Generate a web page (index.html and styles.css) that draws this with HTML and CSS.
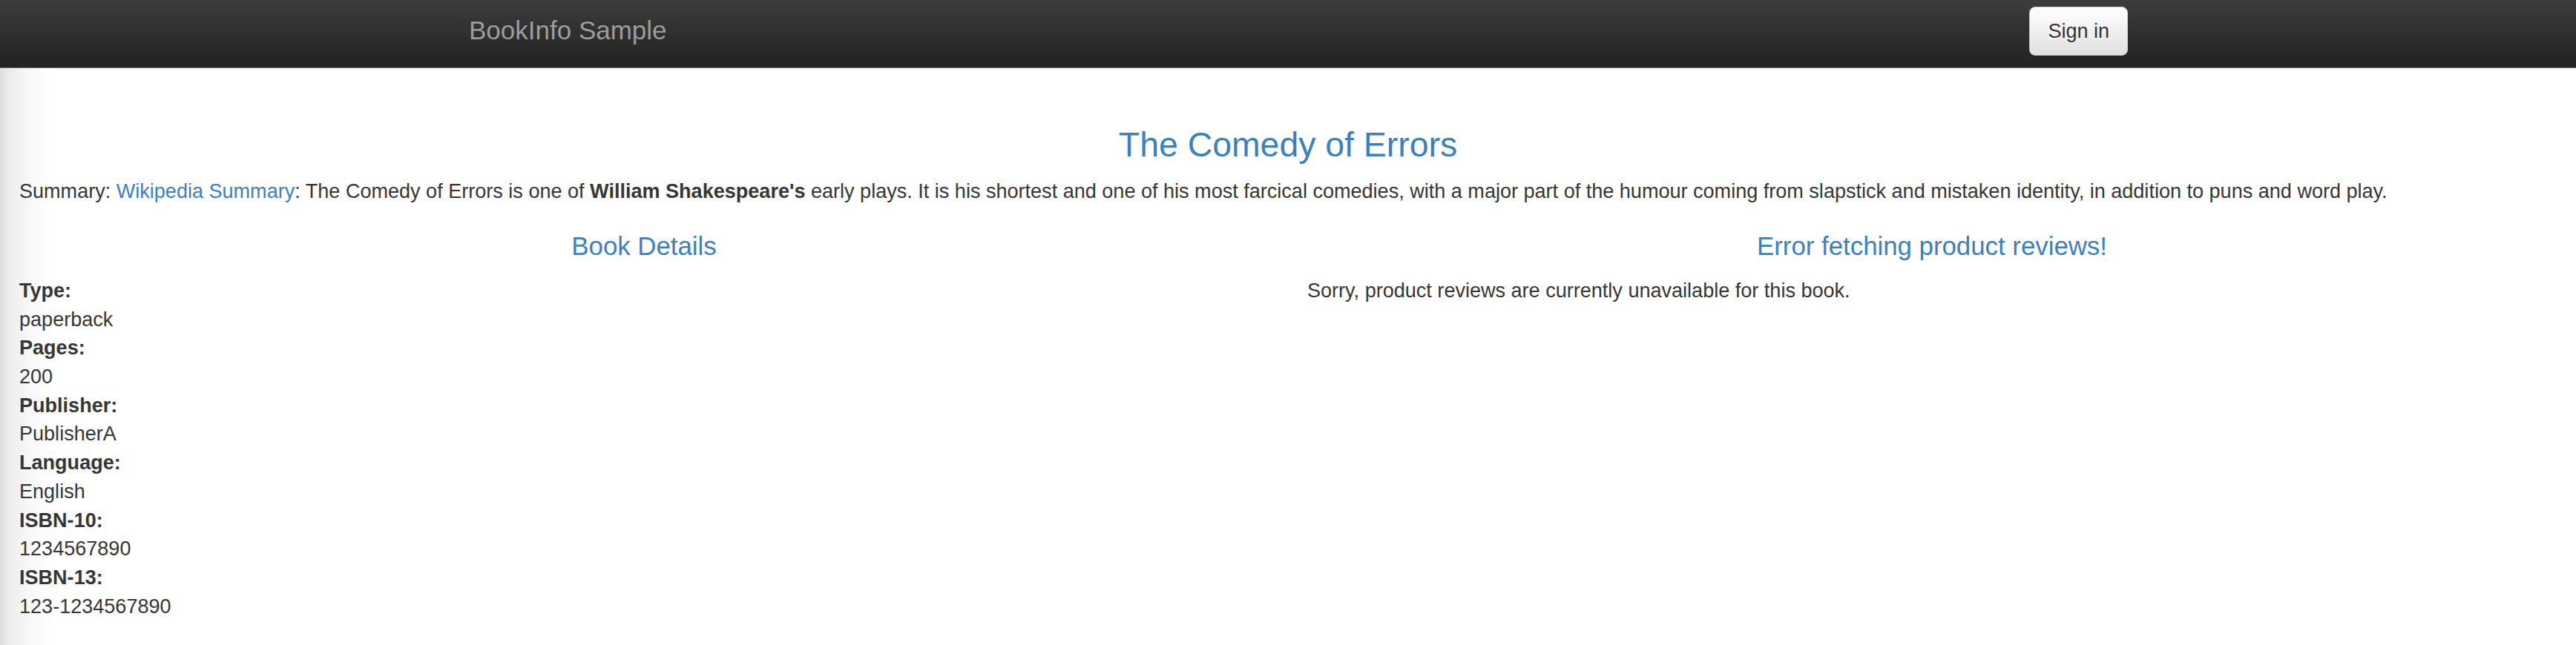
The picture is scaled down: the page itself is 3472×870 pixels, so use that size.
FILE: index.html
```html
<!DOCTYPE html>
<html lang="en">
<head>
<meta charset="utf-8">
<title>Simple Bookstore App</title>
<link rel="stylesheet" href="styles.css">
</head>
<body>
<nav class="navbar">
  <div class="navbar-inner">
    <a class="navbar-brand" href="#">BookInfo Sample</a>
    <button type="button" class="btn-signin">Sign in</button>
  </div>
</nav>
<main class="page">
  <section class="intro">
    <h3 class="book-title">The Comedy of Errors</h3>
    <p class="summary">Summary: <a href="#">Wikipedia Summary</a>: The Comedy of Errors is one of <b>William Shakespeare's</b> early plays. It is his shortest and one of his most farcical comedies, with a major part of the humour coming from slapstick and mistaken identity, in addition to puns and word play.</p>
  </section>
  <section class="columns">
    <div class="col col-left">
      <h4 class="col-heading">Book Details</h4>
      <dl class="details">
        <dt>Type:</dt><dd>paperback</dd>
        <dt>Pages:</dt><dd>200</dd>
        <dt>Publisher:</dt><dd>PublisherA</dd>
        <dt>Language:</dt><dd>English</dd>
        <dt>ISBN-10:</dt><dd>1234567890</dd>
        <dt>ISBN-13:</dt><dd>123-1234567890</dd>
      </dl>
    </div>
    <div class="col col-right">
      <h4 class="col-heading">Error fetching product reviews!</h4>
      <p class="reviews-msg">Sorry, product reviews are currently unavailable for this book.</p>
    </div>
  </section>
</main>
</body>
</html>
```
FILE: styles.css
```css
html, body {
  margin: 0;
  padding: 0;
}

body {
  font-family: "Liberation Sans", Arial, Helvetica, sans-serif;
  font-size: 27.05px;
  line-height: 38.7px;
  color: #363636;
  background: linear-gradient(to right, #dcdcdc 0, #ececec 12px, #f8f8f8 40px, #fff 72px);
  min-height: 870px;
}

a {
  color: #3b80c0;
  text-decoration: none;
}

/* Navbar */
.navbar {
  height: 91px;
  background: linear-gradient(to bottom, #3c3c3c 0%, #222 100%);
  border-bottom: 1px solid #7a7a7a;
}

.navbar-inner {
  width: 2264px;
  margin: 0 auto;
  display: flex;
  justify-content: space-between;
  align-items: flex-start;
}

.navbar-brand {
  color: #9d9d9d;
  font-size: 35px;
  line-height: 40px;
  padding: 21px 0 0 28px;
  text-shadow: 0 -1px 0 rgba(0, 0, 0, .25);
}

.btn-signin {
  margin-top: 9px;
  height: 66px;
  box-sizing: border-box;
  padding: 0 24px;
  font-family: inherit;
  font-size: 27px;
  line-height: 64px;
  color: #333;
  background: linear-gradient(to bottom, #fff 0%, #e0e0e0 100%);
  border: 1px solid #ccc;
  border-radius: 8px;
  box-shadow: inset 0 1px 0 rgba(255, 255, 255, .15), 0 1px 1px rgba(0, 0, 0, .075);
  text-shadow: 0 1px 0 #fff;
}

/* Content */
.intro {
  padding: 0 26px;
}

.book-title {
  margin: 78.4px 0 17.9px;
  font-size: 46.4px;
  line-height: 51px;
  font-weight: 500;
  color: #3b80c0;
  text-align: center;
}

.summary {
  margin: 0;
}

.columns {
  display: grid;
  grid-template-columns: 1fr 1fr;
}

.col {
  padding: 0 26px;
}

.col-heading {
  margin: 35.5px 0 21.2px;
  font-size: 34.8px;
  line-height: 38.3px;
  font-weight: 500;
  color: #3b80c0;
  text-align: center;
}

.details {
  margin: 0;
}

.details dt {
  font-weight: bold;
}

.details dd {
  margin: 0;
}

.reviews-msg {
  margin: 0;
}
```
